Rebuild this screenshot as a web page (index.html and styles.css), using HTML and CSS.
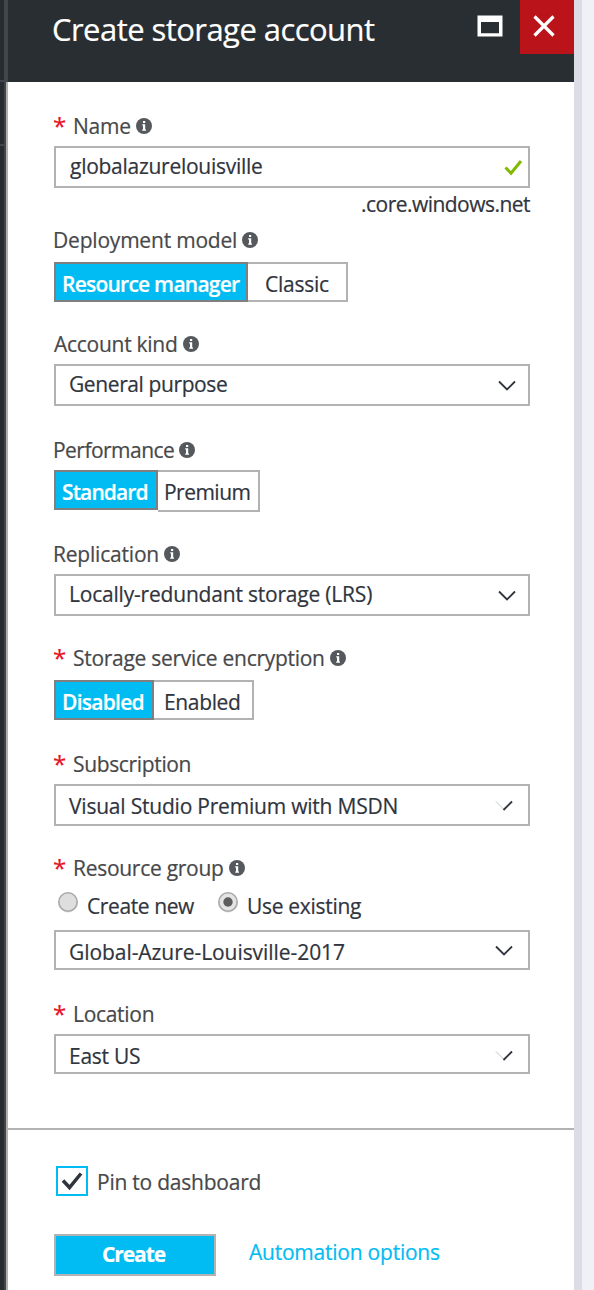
FILE: index.html
```html
<!DOCTYPE html>
<html lang="en">
<head>
<meta charset="utf-8">
<title>Create storage account</title>
<link rel="stylesheet" href="styles.css">
</head>
<body>
<svg class="defs" width="0" height="0" aria-hidden="true">
  <symbol id="info" viewBox="0 0 16 16">
    <circle cx="8" cy="8" r="8" fill="#55585d"/>
    <path d="M7 3h2.200v2H7zM6.200 6.200h3v5.300h.8v1.200H6.200v-1.200H7V7.400h-.8z" fill="#fff"/>
  </symbol>
  <symbol id="chevron" viewBox="0 0 18 12">
    <path d="M1 1.500l8 8 8-8" fill="none" stroke="#30343c" stroke-width="1.800"/>
  </symbol>
  <symbol id="chevron-faded" viewBox="0 0 18 12">
    <path d="M1 1.500l8 8" fill="none" stroke="#c4c4c6" stroke-width="1"/>
    <path d="M8.500 10l8.500-8.500" fill="none" stroke="#30343c" stroke-width="1.900"/>
  </symbol>
</svg>
<div class="portal">
  <div class="rail">
    <div class="rail-cell rail-first"></div>
    <div class="rail-cell rail-second"></div>
    <div class="rail-cell rail-rest"></div>
  </div>
  <div class="edge"><div class="edge-top"></div><div class="edge-body"></div></div>
  <main class="blade">
    <header class="blade-header">
      <h1 class="title">Create storage account</h1>
      <svg class="maximize" width="26" height="22" viewBox="0 0 26 22"><path d="M.5.500h25v21H.5zM4 7v11.200h18V7z" fill="#fff" fill-rule="evenodd"/></svg>
      <div class="close"><svg width="22" height="22" viewBox="0 0 22 22"><path d="M1.500 1.500l19 19M20.500 1.500l-19 19" stroke="#fff" stroke-width="3.200" fill="none"/></svg></div>
    </header>
    <form class="form">
      <div class="label name-label"><span class="star">*</span><span class="t-name">Name</span><svg class="info"><use href="#info"/></svg></div>
      <div class="field"><span class="t-account">globalazurelouisville</span><svg class="valid" width="19" height="17" viewBox="0 0 19 17"><path d="M1.500 8.500l5.500 5.700L17 2" fill="none" stroke="#7fba00" stroke-width="3"/></svg></div>
      <div class="suffix"><span class="t-suffix">.core.windows.net</span></div>

      <div class="label deploy-label"><span class="t-deploy">Deployment model</span><svg class="info"><use href="#info"/></svg></div>
      <div class="toggle">
        <div class="option on w-manager"><span class="t-manager">Resource manager</span></div>
        <div class="option w-classic"><span class="t-classic">Classic</span></div>
      </div>

      <div class="label kind-label"><span class="t-kind">Account kind</span><svg class="info"><use href="#info"/></svg></div>
      <div class="field"><span class="t-general">General purpose</span><svg class="chevron"><use href="#chevron"/></svg></div>

      <div class="label perf-label"><span class="t-perf">Performance</span><svg class="info"><use href="#info"/></svg></div>
      <div class="toggle">
        <div class="option on w-standard"><span class="t-standard">Standard</span></div>
        <div class="option tall w-premium"><span class="t-premium">Premium</span></div>
      </div>

      <div class="label repl-label"><span class="t-repl">Replication</span><svg class="info"><use href="#info"/></svg></div>
      <div class="field"><span class="t-lrs">Locally-redundant storage (LRS)</span><svg class="chevron"><use href="#chevron"/></svg></div>

      <div class="label enc-label"><span class="star">*</span><span class="t-enc">Storage service encryption</span><svg class="info"><use href="#info"/></svg></div>
      <div class="toggle">
        <div class="option on w-disabled"><span class="t-disabled">Disabled</span></div>
        <div class="option w-enabled"><span class="t-enabled">Enabled</span></div>
      </div>

      <div class="label sub-label"><span class="star">*</span><span class="t-sub">Subscription</span></div>
      <div class="field low"><span class="t-msdn">Visual Studio Premium with MSDN</span><svg class="chevron shifted"><use href="#chevron-faded"/></svg></div>

      <div class="label group-label"><span class="star">*</span><span class="t-group">Resource group</span><svg class="info"><use href="#info"/></svg></div>
      <div class="radios">
        <svg class="radio" viewBox="0 0 22 22"><circle cx="11" cy="12" r="9.500" fill="#ddd"/><circle cx="11" cy="11" r="9.200" fill="#dedede" stroke="#a9a9a9" stroke-width="1.600"/></svg>
        <span class="radio-text t-new">Create new</span>
        <svg class="radio" viewBox="0 0 22 22"><circle cx="11" cy="12" r="9.500" fill="#ddd"/><circle cx="11" cy="11" r="9.200" fill="#e4e4e4" stroke="#a9a9a9" stroke-width="1.600"/><circle cx="11" cy="11" r="4.700" fill="#5e5e5e"/></svg>
        <span class="radio-text t-existing">Use existing</span>
      </div>
      <div class="field short"><span class="t-global">Global-Azure-Louisville-2017</span><svg class="chevron shifted"><use href="#chevron"/></svg></div>

      <div class="label loc-label"><span class="star">*</span><span class="t-loc">Location</span></div>
      <div class="field short"><span class="t-east">East US</span><svg class="chevron shifted raised"><use href="#chevron-faded"/></svg></div>
    </form>
    <footer class="footer">
      <div class="pin">
        <div class="checkbox"><svg width="22" height="20" viewBox="0 0 22 20"><path d="M2 9.500l6.500 7L20 2.500" fill="none" stroke="#30343c" stroke-width="3.500"/></svg></div>
        <span class="t-pin">Pin to dashboard</span>
      </div>
      <div class="actions">
        <div class="create"><span class="t-create">Create</span></div>
        <a class="automation t-auto">Automation options</a>
      </div>
    </footer>
  </main>
  <div class="shadow"></div>
  <div class="canvas"></div>
</div>
</body>
</html>
```
FILE: styles.css
```css
* { box-sizing: border-box; }
body {
  margin: 0;
  background: #fff;
  color: #30343c;
  font: 21px/30px "Open Sans", "Noto Sans", sans-serif;
  -webkit-text-stroke: 0.2px currentColor;
}
svg { display: block; flex: none; }
span { white-space: nowrap; }
.defs { position: absolute; }

.portal { display: flex; width: 594px; height: 1290px; overflow: hidden; }
.rail { width: 4px; display: flex; flex-direction: column; background: #272c30; }
.rail-cell { border-bottom: 2px solid #42464a; }
.rail-first { height: 82px; }
.rail-second { height: 64px; }
.rail-rest { flex: 1; border: 0; }
.edge { width: 4px; display: flex; flex-direction: column; }
.edge-top { height: 82px; background: #42464a; }
.edge-body { flex: 1; border-left: 2px solid #42464a; background: #b2b0ad; }
.blade { width: 566px; display: flex; flex-direction: column; }
.shadow { width: 8px; background: #dcdce6; }
.canvas { width: 12px; background: #f0f0f6; }

.blade-header { height: 82px; display: flex; align-items: flex-start; background: #292e32; }
.title {
  flex: 1;
  margin: 0;
  padding: 8px 0 0 44px;
  color: #fff;
  font-size: 31px;
  font-weight: 400;
  line-height: 42px;
  letter-spacing: -0.55px;
  white-space: nowrap;
}
.maximize { margin: 15px 17px 0 0; }
.close { width: 54px; height: 54px; padding: 15px 0 0 13px; background: #ba141a; }

.form { height: 1046px; padding: 29px 44px 0 46px; }
.label { height: 30px; display: flex; align-items: center; color: #47484a; }
.star { width: 20px; height: 30px; margin-left: -1px; color: #e81123; font-size: 24px; line-height: 29px; }
.info { width: 16px; height: 16px; margin-left: 5px; }
.name-label { margin-bottom: 5px; }
.deploy-label { margin: 6px 0 7px -1px; }
.kind-label { margin: 27px 0 5px; }
.perf-label { margin: 29px 0 5px -1px; }
.repl-label { margin: 29px 0 5px -1px; }
.enc-label { margin: 27px 0 7px; }
.sub-label { margin: 29px 0 5px; }
.group-label { margin-top: 27px; }
.loc-label { margin: 29px 0 5px; }

.field {
  width: 476px;
  height: 42px;
  display: flex;
  align-items: flex-start;
  justify-content: space-between;
  padding: 3px 12px 0 13px;
  border: 2px solid #b2b2b2;
}
.field.low { padding-top: 5px; }
.field.short { height: 40px; padding-top: 5px; }
.valid { margin: 8px -7px 0 0; }
.chevron { width: 18px; height: 12px; margin-top: 11px; }
.low .chevron { margin-top: 9px; }
.short .chevron { margin-top: 8px; }
.chevron.shifted { margin-right: 3px; }
.short .chevron.raised { margin-top: 9px; }
.suffix { height: 30px; margin-top: 1px; display: flex; justify-content: flex-end; }

.toggle { height: 40px; display: flex; align-items: flex-start; }
.option { height: 40px; padding: 5px 0 0 17px; border: 2px solid #b2b2b2; border-left: 0; }
.option.on { padding-left: 6px; border: 2px solid #7f7f7f; background: #00bcf2; color: #fff; font-weight: 600; }
.option.tall { height: 42px; }
.w-manager { width: 194px; }
.w-classic { width: 100px; }
.w-standard { width: 104px; }
.w-premium { width: 102px; }
.option.w-premium { padding-left: 6px; }
.w-disabled { width: 100px; }
.w-enabled { width: 100px; }
.option.w-enabled { padding-left: 10px; }

.radios { height: 39px; margin-top: 8px; display: flex; align-items: flex-start; padding-left: 3px; }
.radio { width: 22px; height: 22px; }
.radio-text { margin-left: 8px; }

.footer { height: 162px; padding: 36px 44px 0 46px; border-top: 2px solid #b2b2b2; }
.pin { display: flex; align-items: flex-start; padding-left: 2px; color: #47484a; }
.checkbox { width: 32px; height: 30px; padding: 3px; border: 2px solid #00bcf2; }
.t-pin { margin: 1px 0 -1px 9px; letter-spacing: -0.23px; }
.actions { display: flex; margin-top: 38px; }
.create {
  width: 162px;
  height: 42px;
  display: flex;
  justify-content: center;
  padding: 3px 3px 0 0;
  border: 2px solid #b2b2b2;
  background: #00bcf2;
  color: #fff;
  font-weight: 700;
}
.automation { margin: 3px 0 0 33px; color: #00bcf2; }

/* Label tracking */
.t-name { letter-spacing: -0.2px; }
.t-account { letter-spacing: -0.27px; margin-left: 1px; }
.t-suffix { letter-spacing: -0.53px; }
.t-deploy { letter-spacing: -0.2px; }
.t-manager { letter-spacing: -0.76px; }
.t-classic { letter-spacing: -0.25px; }
.t-kind { letter-spacing: -0.27px; }
.t-general { letter-spacing: -0.4px; }
.t-perf { letter-spacing: -0.53px; }
.t-standard { letter-spacing: -0.88px; }
.t-premium { letter-spacing: -0.52px; }
.t-repl { letter-spacing: -0.2px; }
.t-lrs { letter-spacing: -0.2px; }
.t-enc { letter-spacing: -0.28px; }
.t-disabled { letter-spacing: -0.74px; }
.t-enabled { letter-spacing: -0.36px; }
.t-sub { letter-spacing: -0.35px; }
.t-msdn { letter-spacing: -0.21px; }
.t-group { letter-spacing: -0.28px; }
.t-new { letter-spacing: -0.4px; width: 130px; }
.t-existing { letter-spacing: -0.3px; margin-left: 8px; }
.t-global { letter-spacing: -0.06px; }
.t-loc { letter-spacing: -0.3px; }
.t-east { letter-spacing: -0.27px; }
.t-create { letter-spacing: -1.1px; }
.t-auto { letter-spacing: -0.23px; }
```
